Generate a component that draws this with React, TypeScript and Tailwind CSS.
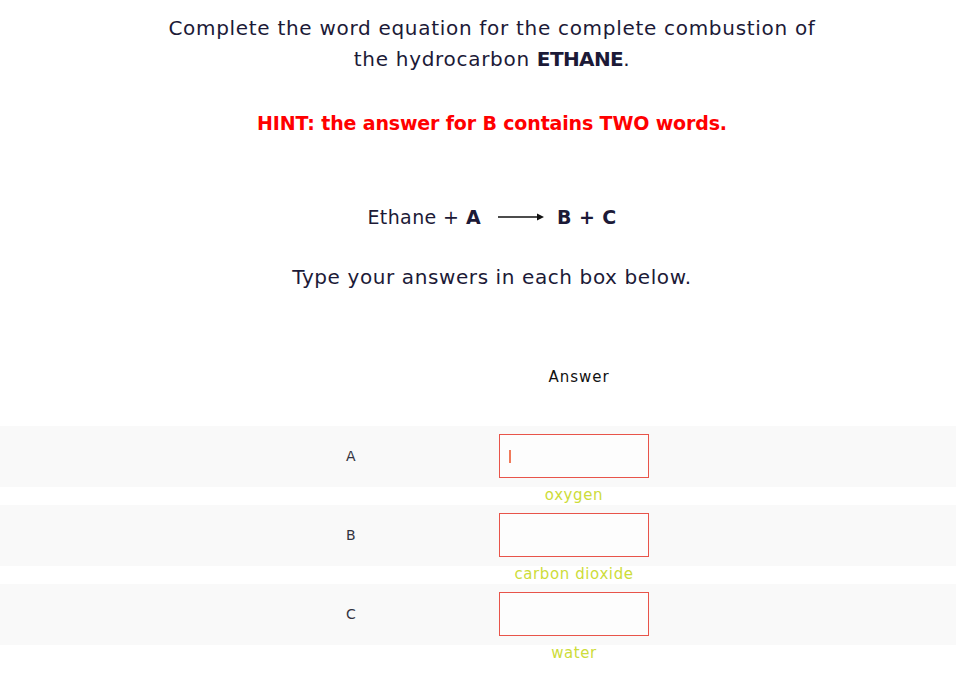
import React from "react";

const font = { fontFamily: '"DejaVu Sans", sans-serif' };

function Row({ label, caption, caret }: { label: string; caption: string; caret?: boolean }) {
  return (
    <>
      <div className="flex h-[61px] w-full items-start bg-[#f9f9f9] pt-[8px]">
        <div className="ml-[300px] flex h-[44px] w-[102px] items-center justify-center text-[14px] tracking-[0.3px] text-[#333340]">
          {label}
        </div>
        <div className="ml-[97px] flex h-[44px] w-[150px] items-center border border-[#e8544a] bg-[#fdfdfd] pl-[9px]">
          {caret && <span className="block h-[13px] w-[2px] bg-[#f07a5a]" />}
        </div>
      </div>
      <div className="flex h-[18px] w-full pt-[1px]">
        <div className="ml-[499px] w-[150px] text-center text-[15px] leading-[15px] tracking-[0.6px] text-[#cddc39]">
          {caption}
        </div>
      </div>
    </>
  );
}

export default function App() {
  return (
    <div className="min-h-[673px] w-[956px] bg-white" style={font}>
      <div className="flex flex-col items-center pl-[28px] pt-[13px] text-[#1c1a37]">
        <p className="text-center text-[20px] leading-[31px] tracking-[0.7px]">
          Complete the word equation for the complete combustion of
          <br />
          the hydrocarbon <b className="font-bold tracking-[-0.6px]">ETHANE</b>.
        </p>
        <p className="mt-[34px] text-center text-[19px] font-bold leading-[28px] tracking-[-0.15px] text-[#ff0000]">
          HINT: the answer for B contains TWO words.
        </p>
        <div className="mt-[66px] flex h-[28px] items-center text-[19px] tracking-[0.4px]">
          <span>
            Ethane + <b className="font-bold">A</b>
          </span>
          <svg width="46" height="10" viewBox="0 0 46 10" className="ml-[17px] mr-[13px]">
            <line x1="0" y1="5" x2="40" y2="5" stroke="#111" strokeWidth="1.5" />
            <path d="M39 1.5 L46 5 L39 8.5 Z" fill="#111" />
          </svg>
          <span className="font-bold">B + C</span>
        </div>
        <p className="mt-[31px] text-center text-[20px] leading-[30px] tracking-[0.6px]">
          Type your answers in each box below.
        </p>
      </div>
      <div className="mt-[74px] flex">
        <div className="ml-[499px] w-[160px] text-center text-[15px] leading-[22px] tracking-[1px] text-[#111]">Answer</div>
      </div>
      <div className="mt-[38px] flex flex-col">
        <Row label="A" caption="oxygen" caret />
        <Row label="B" caption="carbon dioxide" />
        <Row label="C" caption="water" />
      </div>
    </div>
  );
}
